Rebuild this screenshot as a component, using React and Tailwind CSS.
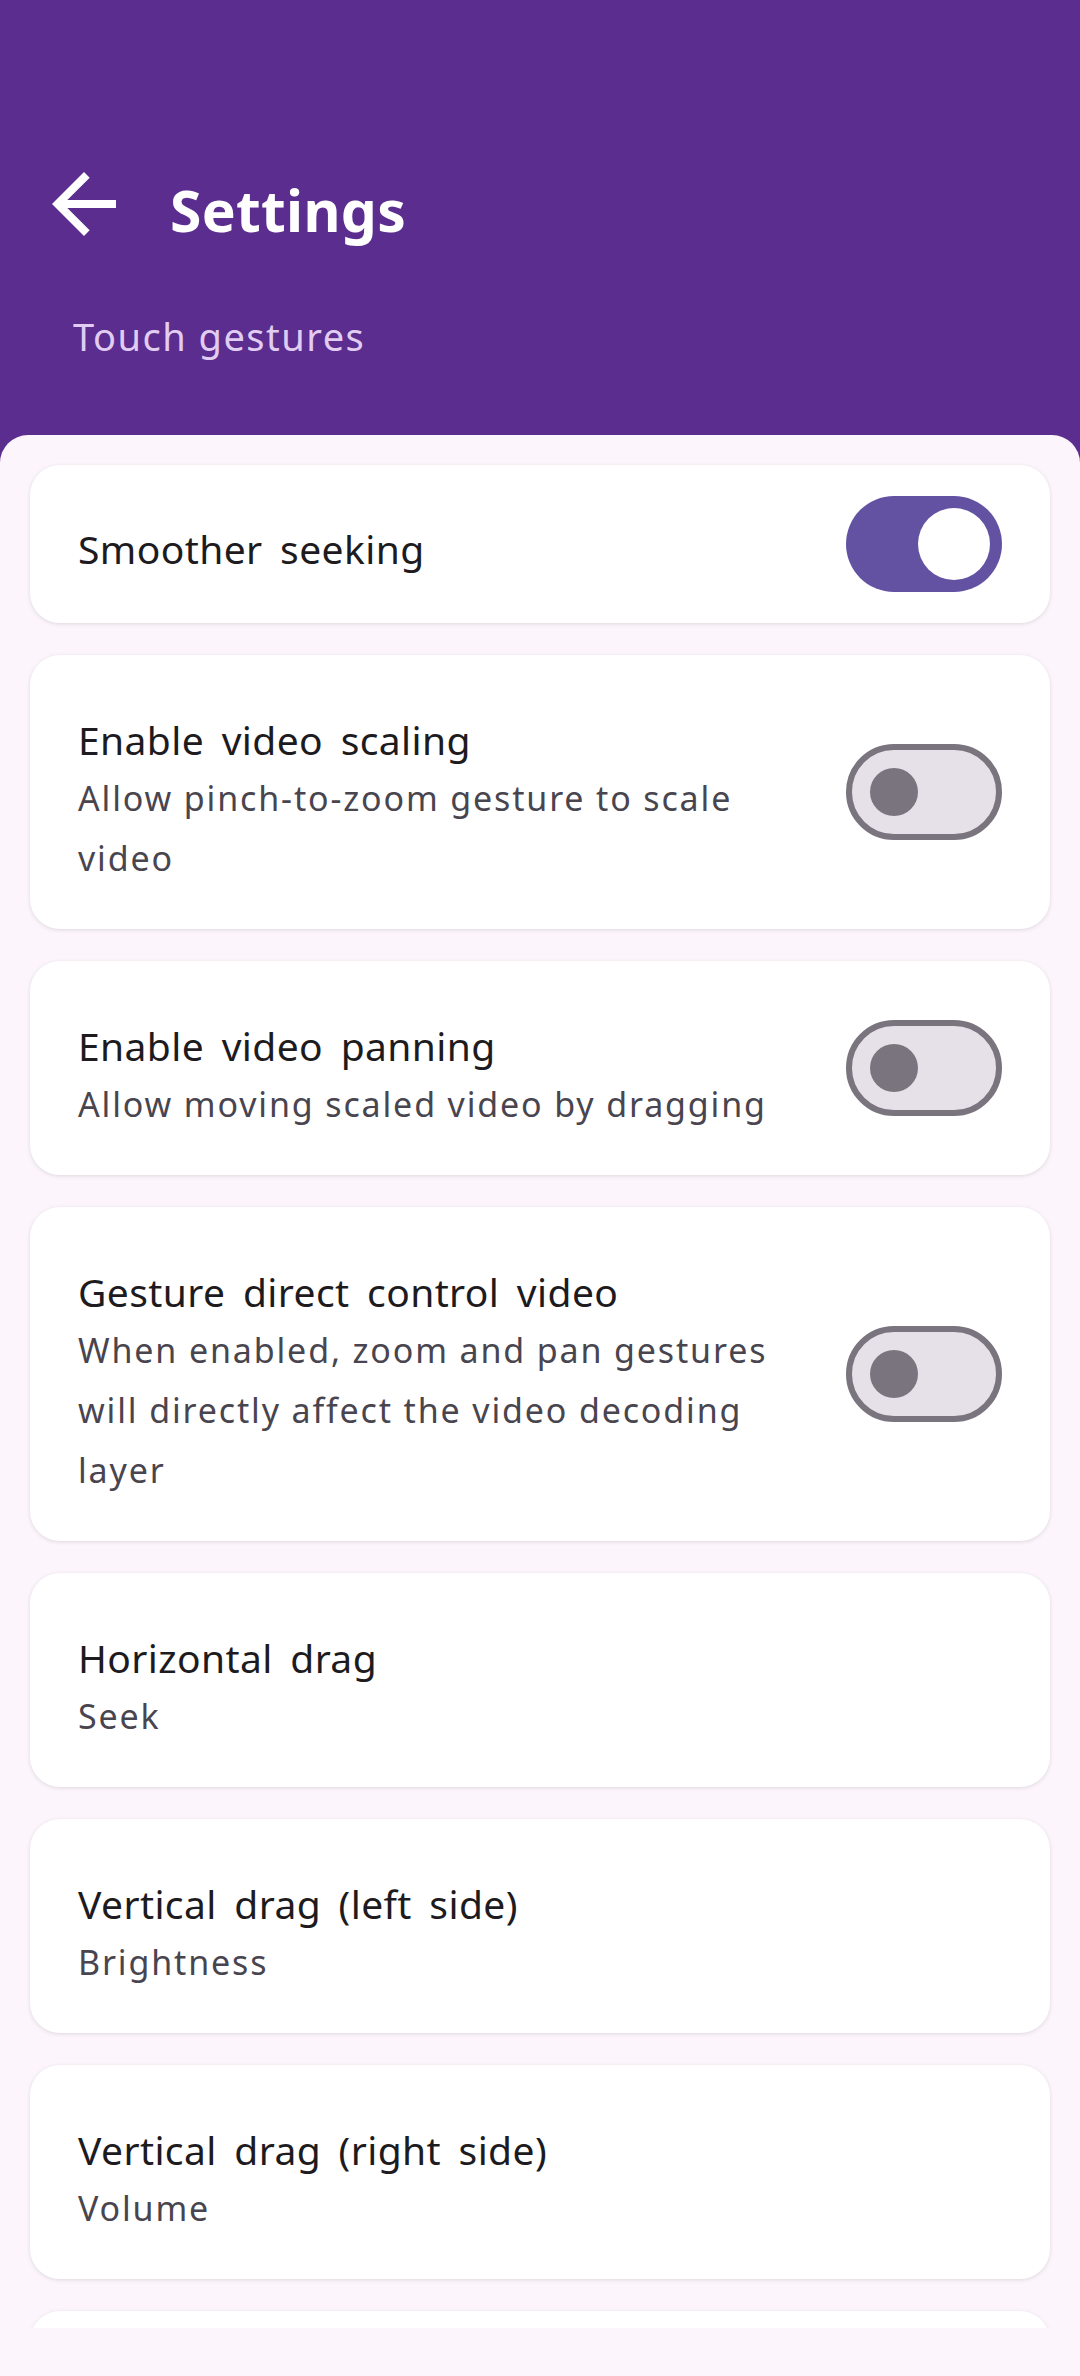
import React from 'react';

const items = [
  { title: 'Smoother seeking', toggle: true, on: true },
  { title: 'Enable video scaling', desc: 'Allow pinch-to-zoom gesture to scale video', toggle: true },
  { title: 'Enable video panning', desc: 'Allow moving scaled video by dragging', toggle: true },
  {
    title: 'Gesture direct control video',
    desc: 'When enabled, zoom and pan gestures will directly affect the video decoding layer',
    toggle: true,
  },
  { title: 'Horizontal drag', desc: 'Seek' },
  { title: 'Vertical drag (left side)', desc: 'Brightness' },
  { title: 'Vertical drag (right side)', desc: 'Volume' },
];

function Toggle({ on }) {
  if (on) {
    return (
      <div className="w-[156px] h-[96px] shrink-0 rounded-full bg-[#6351a2] flex items-center justify-end pr-[12px]">
        <div className="w-[72px] h-[72px] rounded-full bg-white" />
      </div>
    );
  }
  return (
    <div className="w-[156px] h-[96px] shrink-0 rounded-full bg-[#e6e0e9] border-[6px] border-[#79747e] flex items-center pl-[18px]">
      <div className="w-[48px] h-[48px] rounded-full bg-[#79747e]" />
    </div>
  );
}

function Card({ item }) {
  if (!item.desc) {
    return (
      <div className="bg-white rounded-[30px] shadow-[0_1px_4px_rgba(0,0,0,0.12)] flex items-center justify-between pl-[48px] pr-[48px] py-[31px]">
        <div className="text-[39px] leading-[56px] tracking-[0.4px] [word-spacing:7px] text-[#1d1b20] pt-[10px]">
          {item.title}
        </div>
        <Toggle on={item.on} />
      </div>
    );
  }
  return (
    <div className="bg-white rounded-[30px] shadow-[0_1px_4px_rgba(0,0,0,0.12)] flex items-center justify-between pl-[48px] pr-[48px]">
      <div className="flex-1 pt-[57px] pb-[41px] pr-[40px]">
        <div className="text-[39px] leading-[56px] tracking-[0.4px] [word-spacing:7px] text-[#1d1b20]">{item.title}</div>
        <div className="text-[34px] leading-[60px] tracking-[1.85px] text-[#49454f]">{item.desc}</div>
      </div>
      {item.toggle && <Toggle on={item.on} />}
    </div>
  );
}

export default function App() {
  return (
    <div
      className="w-[1080px] h-[2376px] overflow-hidden bg-[#5b2d8e] flex flex-col"
      style={{ fontFamily: '"Noto Sans", "Open Sans", sans-serif' }}
    >
      <div className="pt-[156px]">
        <div className="flex items-center h-[96px]">
          <svg viewBox="0 0 24 24" className="w-[96px] h-[96px] ml-[36px]" fill="#ffffff">
            <path d="M20 11H7.83l5.59-5.59L12 4l-8 8 8 8 1.41-1.41L7.83 13H20v-2z" />
          </svg>
          <div className="ml-[38px] pt-[12px] text-[57px] font-bold text-white tracking-[0.3px] leading-[64px]">
            Settings
          </div>
        </div>
        <div className="pl-[73px] mt-[60px] h-[48px] text-[38px] leading-[48px] tracking-[1.5px] text-[#e2cdf2]">
          Touch gestures
        </div>
      </div>
      <div className="mt-[75px] flex-1 flex flex-col bg-[#fcf5fc] rounded-t-[28px] overflow-hidden">
        <div className="flex-1 overflow-hidden px-[30px] pt-[30px] flex flex-col gap-[32px]">
          {items.map((item) => (
            <Card key={item.title} item={item} />
          ))}
          <div className="bg-white rounded-[30px] shadow-[0_1px_4px_rgba(0,0,0,0.12)] h-[214px] shrink-0" />
        </div>
        <div className="h-[48px] shrink-0 bg-[#fcf5fc]" />
      </div>
    </div>
  );
}
